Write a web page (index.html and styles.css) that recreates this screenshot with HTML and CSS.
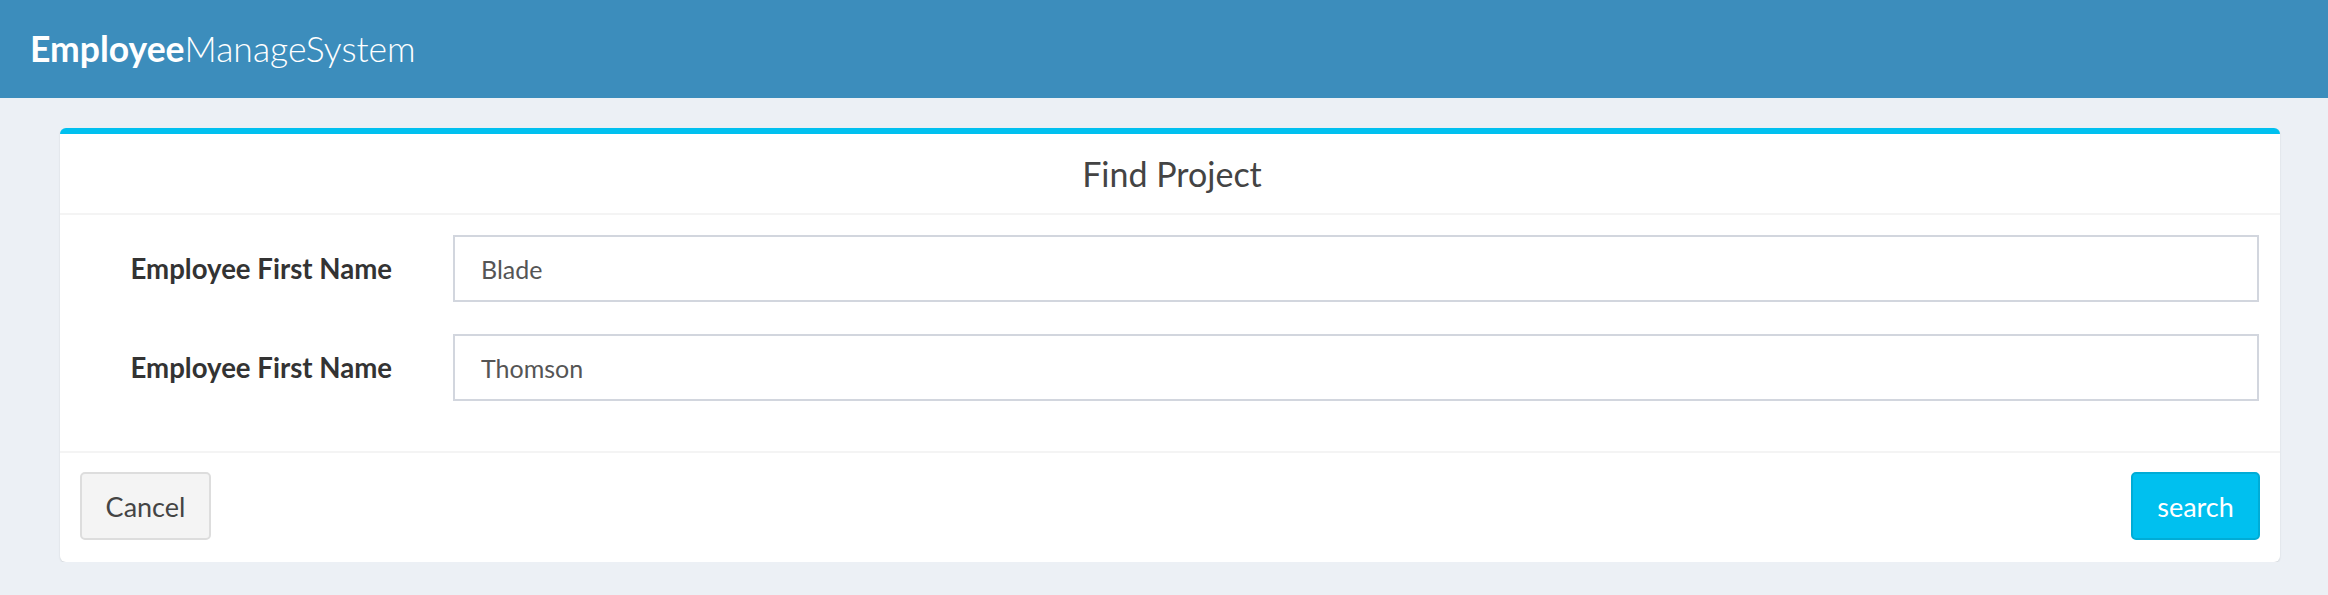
FILE: index.html
```html
<!DOCTYPE html>
<html>
<head>
<meta charset="utf-8">
<title>EmployeeManageSystem</title>
<link rel="stylesheet" href="styles.css">
</head>
<body>
<header class="topbar">
  <div class="logo"><b>Employee</b>ManageSystem</div>
</header>
<main class="content">
  <section class="box">
    <div class="box-header">
      <h3 class="box-title">Find Project</h3>
    </div>
    <form class="box-body">
      <div class="form-row">
        <label class="form-label">Employee First Name</label>
        <input class="form-input" type="text" value="Blade">
      </div>
      <div class="form-row">
        <label class="form-label">Employee First Name</label>
        <input class="form-input" type="text" value="Thomson">
      </div>
    </form>
    <div class="box-footer">
      <button class="btn btn-default" type="button">Cancel</button>
      <button class="btn btn-info" type="button">search</button>
    </div>
  </section>
</main>
</body>
</html>
```

FILE: styles.css
```css
html, body {
  margin: 0;
  padding: 0;
}
body {
  background: #ecf0f5;
  font-family: Lato, "Liberation Sans", sans-serif;
  color: #333;
}
.topbar {
  height: 98px;
  background: #3c8dbc;
  display: flex;
  align-items: center;
  padding-left: 30px;
  box-sizing: border-box;
}
.logo {
  color: #fff;
  font-size: 35.5px;
  font-weight: 300;
  padding-bottom: 2px;
}
.logo b {
  font-weight: 700;
}
.content {
  padding: 30px 48px 0 60px;
}
.box {
  background: #fff;
  border-top: 6px solid #00c0ef;
  border-radius: 6px;
  box-shadow: 0 1px 2px rgba(0,0,0,0.12);
  height: 434px;
  box-sizing: border-box;
  display: flex;
  flex-direction: column;
}
.box-header {
  height: 81px;
  border-bottom: 2px solid #f4f4f4;
  box-sizing: border-box;
  display: flex;
  align-items: center;
  justify-content: center;
}
.box-title {
  margin: 0;
  font-size: 34px;
  font-weight: 400;
  color: #444;
  padding-left: 4px;
}
.box-body {
  margin: 0;
  padding: 20px 21px 0 21px;
  height: 238px;
  box-sizing: border-box;
  display: flex;
  flex-direction: column;
  gap: 32px;
  border-bottom: 2px solid #f4f4f4;
}
.form-row {
  display: grid;
  grid-template-columns: 311px 1fr;
  column-gap: 61px;
  align-items: center;
}
.form-label {
  text-align: right;
  font-weight: 700;
  font-size: 27.6px;
  color: #333;
}
.form-input {
  height: 67px;
  box-sizing: border-box;
  border: 2px solid #d2d6de;
  border-radius: 0;
  padding: 0 26px;
  font-family: inherit;
  font-size: 25px;
  color: #555;
  background: #fff;
  outline: none;
}
.box-footer {
  flex: 1;
  display: flex;
  justify-content: space-between;
  align-items: flex-start;
  padding: 19px 20px 0 20px;
}
.btn {
  height: 68px;
  border-radius: 5px;
  font-family: inherit;
  font-size: 27px;
  padding: 0;
  cursor: pointer;
}
.btn-default {
  width: 131px;
  background: #f4f4f4;
  border: 2px solid #ddd;
  color: #444;
}
.btn-info {
  width: 129px;
  background: #00c0ef;
  border: 2px solid #00acd6;
  color: #fff;
}
```
